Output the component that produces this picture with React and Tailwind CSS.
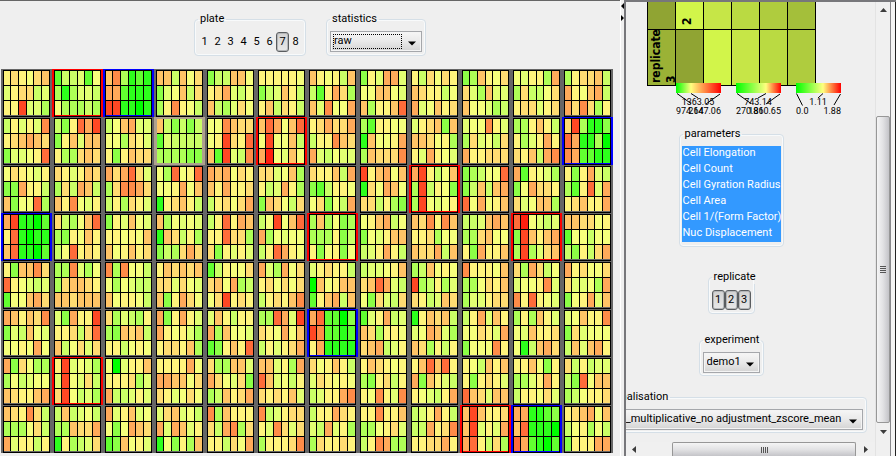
import React from "react";

const SCALE = [
  "#00ff00", "#2dff1c", "#62ff30", "#8cff46", "#aeff56", "#caff66", "#e2ff72", "#f6ff7c",
  "#fff47c", "#ffdc72", "#ffc466", "#ffaa5a", "#ff8c48", "#ff6c3a", "#ff4824", "#ff2010",
];

const PLATE = [
  "89879a/689956/88e664 255627/414665/744454 ac4121/bb2111/ee1101 aa5a79/367a59/48c875 355aa7/89b657/a54697 888887/356a85/8a5985 a8785a/528b94/a6c77b 386bb6/77aa76/a488ad 859798/a98857/b67a89 34a879/964a66/a77645 76884b/495579/899689 4899a5/b87ab5/b9c948",
  "58686c/89aba9/36678d 538dbe/38a6aa/8449a9 57ab66/774986/838a99 a53535/265555/444433 77ca99/78e98d/a2e65c adb7ad/7e77a5/bf76a7 89b99b/588ca9/b65766 428877/1a778b/4a999c 689a3a/aa9784/86b876 677c86/496759/b88999 448a85/8468b8/98a5bc 9e4113/db1140/cb2211",
  "798768/33b885/a377d4 9868a9/495ba5/a8c768 b9bd96/49ccb9/584986 74d78d/778b7a/189a85 bab798/a8b889/58979b 9967a4/856b84/3a9759 988a5b/325887/79375b e8ab7a/197ba7/995843 be857a/4e5873/4e7678 34577d/35a5ab/d7b78a b28764/37b998/967aa4 838b65/428d6b/89a88b",
  "be1102/8d1011/ad1102 9547ad/4387a8/57d898 386a76/88787a/a78a89 a47676/1a9584/3549b9 58d8ba/88d994/938686 57e7ad/b47677/58db87 4a4734/444835/837837 78ab57/3768aa/568b85 a9c8ca/889477/a99b5a 556aba/449a77/83b88a df7656/3ea8ab/4e469a aa9978/277577/53859b",
  "83aac9/d87656/277ab9 44c647/49aa98/aa9aaa c4c775/747655/a78875 8a9a9a/996976/a38b97 258779/9a7b45/79e898 b64b79/897979/5898ac 689885/0a78aa/28ab5a 56678a/9adb65/739659 45a787/e45846/9856a9 c8887a/44798a/466899 94b957/6778c6/c8d876 b89779/96674b/378b6a",
  "ba8a9c/365a76/7787b7 63b88e/88959d/a57969 946548/43a9a5/885787 b38b86/b87864/8998a4 6a8588/b4a776/238a8d 44db6e/987b7a/58689b bd2203/ec2212/8b1111 268b56/a94887/9ab568 18a9a5/67ba64/a94858 58b6a8/77986b/3777c8 484a86/76a889/715ab9 67a88c/396777/5a6ab8",
  "b39744/475677/a988ab 8e6764/6e7695/9e7564 70688a/888946/b55686 8888b7/bbaa79/986797 944aa6/b97693/45a89b aa684b/da6758/9898a6 978a85/698787/5688bc 8a9878/438958/87c86c 8adad8/b3a865/87658b 875a8a/838986/da96aa 88a738/4468b8/588796 958566/53d7aa/457889",
  "a98c95/444795/b68858 5a5675/44a99b/184569 b68a67/737ba9/23a786 69a675/b6ba68/17384a c4a888/95bc49/88597b c56899/86c969/48889c 588b98/65b684/498898 88c88a/447896/58cb44 568b85/55b89c/8899b8 aea889/ae686b/bd8594 bb1123/ad1110/db2102 89ab7a/578475/3888bb",
].map((row) => row.split(" ").map((well) => well.split("/").join("").split("")));

const MARKS = {
  "0-1": "red", "0-2": "blue", "1-3": "picked", "1-5": "red", "1-11": "blue", "2-8": "red", "3-0": "blue",
  "3-6": "red", "3-10": "red", "5-6": "blue", "6-1": "red", "7-9": "red", "7-10": "blue",
};

const FRAME = {
  none: "bg-[#666666]",
  red: "bg-[#ff0000]",
  blue: "bg-[#0000ff]",
  picked: "bg-[#aea18e]",
};

function Well({ values, mark = "none" }) {
  const edge = mark === "picked" ? "border-[#aea18e]" : "border-black";
  return (
    <div className={`h-12 px-0.5 pt-px ${FRAME[mark]}`}>
      <div className={`h-[47px] border ${edge} ${FRAME[mark]}`}>
        <div className="grid h-11 grid-cols-[6fr_7fr_7fr_6fr_7fr_7fr] grid-rows-3 gap-px bg-black">
          {values.map((v, i) => (
            <span key={i} style={{ backgroundColor: SCALE[parseInt(v, 16)] }} />
          ))}
        </div>
      </div>
    </div>
  );
}

function Group({ title, className = "", children }) {
  return (
    <fieldset className={`min-w-0 rounded-[4px] border border-[#d5dfe7] shadow-[inset_0_0_0_1px_#f8fafb] ${className}`}>
      <legend className="ml-[3px] h-3.5 px-0.5 leading-[14px] whitespace-nowrap">{title}</legend>
      {children}
    </fieldset>
  );
}

function Toggle({ on, children }) {
  return (
    <button
      type="button"
      aria-pressed={on}
      className={`h-5 w-[13px] text-center leading-4 ${
        on ? "rounded-[3px] border border-[#5a5d60] bg-linear-to-b from-[#d2d2d2] to-[#e8e8e8] shadow-[inset_0_0_0_1px_#b4b6b8]" : ""
      }`}
    >
      {children}
    </button>
  );
}

function Combo({ label, value, className = "", focused }) {
  return (
    <div className={`relative mx-[3px] mt-[5px] h-[21px] ${className}`}>
      <select
        aria-label={label}
        className="block h-full w-full appearance-none border border-[#a5a7ab] bg-linear-to-b from-[#f6f6f6] via-[#e9e9e9] to-[#d4d4d4] pr-4 pl-[3px] shadow-[inset_0_0_0_1px_#f4f4f4] outline-none"
      >
        <option>{value}</option>
      </select>
      {focused && <span className="pointer-events-none absolute top-[3px] right-5 bottom-[3px] left-[3px] border border-dotted border-black" />}
      <svg className="pointer-events-none absolute top-[10px] right-[6px]" width="8" height="5" viewBox="0 0 8 5">
        <path d="M0 0.5h8L4 4.5z" fill="#000" />
      </svg>
    </div>
  );
}

const REPLICATES = [
  { h: "h-[27px]", cells: ["bg-[#90a433]", "bg-[#d2f54a]", "bg-[#c6e647]", "bg-[#bada42]", "bg-[#afcc3e]", "bg-[#a4bf3a]"], label: "2", at: 1 },
  { h: "h-[56px]", cells: ["bg-[#9bb236]", "bg-[#90a433]", "bg-[#d2f54a]", "bg-[#c6e647]", "bg-[#bada42]", "bg-[#afcc3e]"], label: "replicate 3", at: 0 },
];

function ReplicateTable() {
  return (
    <table className="mx-auto w-[169px] table-fixed border-collapse border-b border-black">
      <tbody>
        {REPLICATES.map((row) => (
          <tr key={row.label}>
            {row.cells.map((c, i) => (
              <td key={i} className={`${row.h} border-x border-b border-black p-0 ${c}`}>
                {i === row.at && (
                  <div
                    className={`flex rotate-180 items-start font-['DejaVu_Sans_Condensed','DejaVu_Sans',sans-serif] text-[12px] leading-[15px] font-bold [writing-mode:vertical-rl] ${
                      row.at ? "h-[27px] w-[27px] pt-1 pr-1" : "h-[55px] w-[27px] pt-0.5 pr-px"
                    }`}
                  >
                    {row.label}
                  </div>
                )}
              </td>
            ))}
          </tr>
        ))}
      </tbody>
    </table>
  );
}

const LEGENDS = [
  { x: 0, mid: 15, low: "974.64", middle: "1363.05", high: "2147.06", midX: 22 },
  { x: 60, mid: 30, low: "270.86", middle: "743.14", high: "1810.65", midX: 82 },
  { x: 120, mid: 27, low: "0.0", middle: "1.11", high: "1.88", midX: 142 },
];

function ColourScales() {
  return (
    <svg className="relative -mt-[3px] ml-[89px] block" width="170" height="34" viewBox="0 0 170 34" fontSize="9">
      {LEGENDS.map((l) => (
        <g key={l.x}>
          <defs>
            <linearGradient id={`scale${l.x}`}>
              <stop offset="0" stopColor="#00ff00" />
              <stop offset={l.mid / 45} stopColor="#ffff80" />
              <stop offset="1" stopColor="#ff0000" />
            </linearGradient>
          </defs>
          <rect x={l.x} width="45" height="10" fill={`url(#scale${l.x})`} />
          <g stroke="#000" fill="none">
            {l.x < 120 ? (
              <path d={`M${l.x + 1} 10.5l14 10M${l.x + l.mid} 10.5L${l.midX} 15M${l.x + 44} 11l-14 10`} />
            ) : (
              <path d={`M${l.x + 0.5} 10.5l6 12M${l.x + l.mid} 10.5L${l.midX} 15M${l.x + 44.5} 11l-6.5 11`} />
            )}
          </g>
          <text x={l.midX} y="22" textAnchor="middle">{l.middle}</text>
          <text x={l.x} y="31">{l.low}</text>
          <text x={l.x + 45} y="31" textAnchor="end">{l.high}</text>
        </g>
      ))}
    </svg>
  );
}

const PARAMETERS = ["Cell Elongation", "Cell Count", "Cell Gyration Radius", "Cell Area", "Cell 1/(Form Factor)", "Nuc Displacement"];

function Arrow({ d }) {
  return (
    <svg width="7" height="7" viewBox="0 0 7 7" className="shrink-0">
      <path d={d} fill="#3c3c3c" />
    </svg>
  );
}

export default function App() {
  return (
    <div className="flex h-screen overflow-hidden bg-[#efefef] font-[Roboto,'DejaVu_Sans_Condensed',sans-serif] text-[11px] text-black">
      <main className="min-w-0 flex-1 border-t border-[#666666]">
        <div className="flex h-[68px] items-start justify-center gap-5 pt-[11px]">
          <Group title="plate" className="h-11 w-28">
            <div className="flex pt-1.5 pl-[3px]">
              {[1, 2, 3, 4, 5, 6, 7, 8].map((n) => (
                <Toggle key={n} on={n === 7}>{n}</Toggle>
              ))}
            </div>
          </Group>
          <Group title="statistics" className="h-11 w-[100px]">
            <Combo label="statistics" value="raw" focused />
          </Group>
        </div>
        <div className="grid grid-cols-12 pr-[7px] pl-px">
          {PLATE.flatMap((row, r) => row.map((values, c) => <Well key={`${r}-${c}`} values={values} mark={MARKS[`${r}-${c}`]} />))}
        </div>
      </main>

      <div className="w-1 shrink-0 border-l border-white pt-[3px]">
        <svg width="3" height="20" viewBox="0 0 3 20">
          <path d="M3 0v6L0 3zM0 12l3 3-3 3z" fill="#000" />
        </svg>
      </div>

      <aside className="flex w-[272px] shrink-0 border-t-2 border-l-2 border-[#77777b]">
        <div className="flex min-w-0 flex-1 flex-col">
          <div className="flex min-h-0 flex-1 justify-end overflow-hidden">
            <div className="flex w-72 shrink-0 flex-col">
              <ReplicateTable />
              <ColourScales />
              <Group title="parameters" className="mx-auto mt-[10px] h-[120px] w-[105px]">
                <select
                  multiple
                  size={6}
                  aria-label="parameters"
                  defaultValue={PARAMETERS}
                  className="mx-auto mt-[5px] block h-24 w-[99px] overflow-hidden bg-[#3399ff] outline-none"
                >
                  {PARAMETERS.map((p) => (
                    <option
                      key={p}
                      className="h-4 min-h-0 bg-linear-to-b from-[#3399ff] to-[#3399ff] p-0 pl-px leading-[18px] [-webkit-text-fill-color:#ffffff]"
                    >
                      {p}
                    </option>
                  ))}
                </select>
              </Group>
              <Group title="replicate" className="mx-auto mt-[23px] h-11 w-[47px]">
                <div className="flex justify-center pt-1.5">
                  {[1, 2, 3].map((n) => (
                    <Toggle key={n} on>{n}</Toggle>
                  ))}
                </div>
              </Group>
              <Group title="experiment" className="mx-auto mt-[19px] h-[43px] w-[65px]">
                <Combo label="experiment" value="demo1" />
              </Group>
              <Group title="normalisation" className="mx-auto mt-[14px] h-[43px] w-[272px]">
                <Combo label="normalisation" value="raw__multiplicative_no adjustment_zscore_mean" />
              </Group>
            </div>
          </div>
          <div className="flex h-3.5 items-center bg-[#f0f0f0] pr-1.5 pl-[5px]">
            <Arrow d="M5 0v7L1 3.5z" />
            <div className="ml-[34px] flex h-3.5 w-[184px] items-center justify-center gap-px rounded-t-xs border border-b-0 border-[#979797] bg-linear-to-b from-[#f5f5f5] via-[#e2e2e4] to-[#c4c4c8]">
              {[0, 1, 2, 3].map((i) => <span key={i} className="h-1.5 w-px bg-[#555555]" />)}
            </div>
            <span className="flex-1" />
            <Arrow d="M2 0v7l4-3.5z" />
          </div>
        </div>
        <div className="flex w-[15px] flex-col items-center border-l border-[#e3e3e3] bg-[#f0f0f0] pt-[5px] pb-5">
          <Arrow d="M0 5h7L3.500 1z" />
          <div className="mt-[102px] flex w-full flex-1 flex-col items-center justify-center gap-px rounded-xs border border-[#979797] bg-linear-to-r from-[#f5f5f5] via-[#e2e2e4] to-[#c4c4c8]">
            {[0, 1, 2, 3].map((i) => <span key={i} className="h-px w-1.5 bg-[#555555]" />)}
          </div>
          <span className="h-1.5" />
          <Arrow d="M0 1h7L3.500 5z" />
        </div>
        <div className="w-1.5 border-r border-l border-r-[#222222] border-l-[#88888c] bg-[#f4f4f4]" />
      </aside>
    </div>
  );
}
